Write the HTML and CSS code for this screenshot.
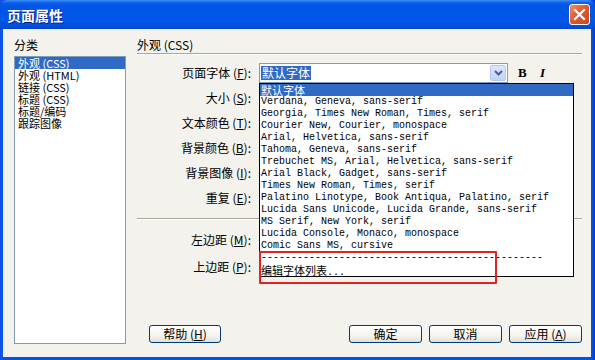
FILE: index.html
```html
<!DOCTYPE html>
<html>
<head>
<meta charset="utf-8">
<link rel="stylesheet" href="styles.css">
</head>
<body>
<div class="window">
  <div class="titlebar">
    <span class="title">页面属性</span>
    <span class="close"><svg width="13" height="13" viewBox="0 0 13 13"><path d="M2 2 L11 11 M11 2 L2 11" stroke="#fff" stroke-width="2.2" stroke-linecap="square"/></svg></span>
  </div>
  <div class="client">
    <div class="left">
      <div class="cap">分类</div>
      <div class="listbox">
        <div class="li sel">外观 (CSS)</div>
        <div class="li">外观 (HTML)</div>
        <div class="li">链接 (CSS)</div>
        <div class="li">标题 (CSS)</div>
        <div class="li">标题/编码</div>
        <div class="li">跟踪图像</div>
      </div>
    </div>
    <div class="right">
      <div class="cap">外观 (CSS)</div>
      <div class="sep"></div>
      <div class="form">
        <div class="row">
          <span class="lbl">页面字体 (<u>F</u>):</span>
          <div class="select">
            <span class="selval">默认字体</span>
            <span class="arrow"><svg width="9" height="6" viewBox="0 0 9 6"><path d="M1 1 L4.5 4.5 L8 1" fill="none" stroke="#4D6185" stroke-width="2"/></svg></span>
          </div>
          <span class="bold">B</span>
          <span class="ital">I</span>
        </div>
        <div class="row"><span class="lbl">大小 (<u>S</u>):</span></div>
        <div class="row"><span class="lbl">文本颜色 (<u>T</u>):</span></div>
        <div class="row"><span class="lbl">背景颜色 (<u>B</u>):</span></div>
        <div class="row"><span class="lbl">背景图像 (<u>I</u>):</span></div>
        <div class="row"><span class="lbl">重复 (<u>E</u>):</span></div>
        <div class="sep2"></div>
        <div class="row"><span class="lbl">左边距 (<u>M</u>):</span></div>
        <div class="row last"><span class="lbl">上边距 (<u>P</u>):</span></div>
      </div>
      <div class="buttons">
        <span class="btn help">帮助 (<u>H</u>)</span>
        <span class="btn">确定</span>
        <span class="btn">取消</span>
        <span class="btn">应用 (<u>A</u>)</span>
      </div>
    </div>
    <div class="dropdown">
      <div class="dd sel"><span class="cn">默认字体</span></div>
      <div class="dd">Verdana, Geneva, sans-serif</div>
      <div class="dd">Georgia, Times New Roman, Times, serif</div>
      <div class="dd">Courier New, Courier, monospace</div>
      <div class="dd">Arial, Helvetica, sans-serif</div>
      <div class="dd">Tahoma, Geneva, sans-serif</div>
      <div class="dd">Trebuchet MS, Arial, Helvetica, sans-serif</div>
      <div class="dd">Arial Black, Gadget, sans-serif</div>
      <div class="dd">Times New Roman, Times, serif</div>
      <div class="dd">Palatino Linotype, Book Antiqua, Palatino, serif</div>
      <div class="dd">Lucida Sans Unicode, Lucida Grande, sans-serif</div>
      <div class="dd">MS Serif, New York, serif</div>
      <div class="dd">Lucida Console, Monaco, monospace</div>
      <div class="dd">Comic Sans MS, cursive</div>
      <div class="dd">-----------------------------------------------</div>
      <div class="dd"><span class="cn">编辑字体列表</span>...</div>
    </div>
    <div class="redbox"></div>
  </div>
</div>
</body>
</html>
```

FILE: styles.css
```css
* { box-sizing: border-box; margin: 0; padding: 0; }
html, body { width: 595px; height: 360px; overflow: hidden; }
body {
  margin: 0;
  background: #0054E3;
  font-family: "Noto Sans CJK SC", "Liberation Sans", sans-serif;
  font-size: 12px;
  color: #000;
}
.window {
  width: 595px;
  height: 360px;
  display: flex;
  flex-direction: column;
  background: linear-gradient(to right, #0831D9 0, #166AEE 1px, #0054E3 2px, #0054E3 592px, #0831D9 595px);
}
.titlebar {
  height: 29px;
  flex: none;
  display: flex;
  align-items: center;
  justify-content: space-between;
  padding: 0 5px 0 7px;
  border-radius: 7px 7px 0 0;
  background: linear-gradient(to bottom, #3D8FF8 0, #0A5DE8 3px, #0055E4 6px, #0057E8 20px, #0050DC 26px, #0046CC 29px);
}
.title {
  color: #fff;
  font-weight: bold;
  font-size: 14px;
  line-height: 14px;
  text-shadow: 1px 1px #0A1E8C;
}
.close {
  width: 21px;
  height: 21px;
  border: 1px solid #fff;
  border-radius: 3px;
  background: linear-gradient(135deg, #F08F6A 0, #E25A2C 45%, #C8461C 100%);
  display: flex;
  align-items: center;
  justify-content: center;
}
.client {
  flex: 1;
  position: relative;
  margin: 0 4px 3px 3px;
  background: #F3F2EC;
  display: flex;
  gap: 11px;
  padding: 9px 9px 13px 11px;
}
.left {
  width: 112px;
  flex: none;
  display: flex;
  flex-direction: column;
}
.cap {
  height: 14px;
  line-height: 14px;
  margin-bottom: 4px;
  white-space: nowrap;
}
.right .cap { margin-bottom: 1px; }
.listbox {
  flex: 1;
  background: #fff;
  border: 1px solid #7F9DB9;
}
.li {
  height: 12px;
  line-height: 12px;
  font-size: 11px;
  padding-left: 3px;
  white-space: nowrap;
}
.li.sel {
  background: #316AC5;
  color: #fff;
}
.right {
  flex: 1;
  display: flex;
  flex-direction: column;
}
.sep {
  border-top: 1px solid #ACA899;
  border-bottom: 1px solid #fff;
}
.form {
  margin-top: 5px;
  display: flex;
  flex-direction: column;
}
.row {
  height: 25px;
  display: flex;
  align-items: center;
}
.row.last { height: 29px; }
.lbl {
  width: 114px;
  flex: none;
  text-align: right;
  white-space: nowrap;
  line-height: 14px;
}
.sep2 {
  margin: 8px 0 7px;
  border-top: 1px solid #ACA899;
  border-bottom: 1px solid #fff;
}
.select {
  margin-left: 8px;
  width: 249px;
  height: 20px;
  border: 1px solid #7F9DB9;
  background: #fff;
  display: flex;
  align-items: center;
  padding: 0 1px;
}
.selval {
  background: #316AC5;
  color: #fff;
  height: 14px;
  line-height: 14px;
  padding: 0 1px;
}
.arrow {
  margin-left: auto;
  width: 16px;
  height: 16px;
  border-radius: 2px;
  border: 1px solid #B7C9F2;
  background: linear-gradient(to bottom, #DCE6FC 0, #C1D3FB 100%);
  display: flex;
  align-items: center;
  justify-content: center;
}
.bold {
  margin-left: 10px;
  font-family: "Liberation Serif", serif;
  font-weight: bold;
  font-size: 13px;
  width: 12px;
}
.ital {
  margin-left: 10px;
  font-family: "Liberation Serif", serif;
  font-weight: bold;
  font-style: italic;
  font-size: 13px;
}
.buttons {
  margin-top: auto;
  margin-bottom: 1px;
  height: 18px;
  display: flex;
  gap: 7px;
  padding-left: 12px;
}
.btn {
  width: 73px;
  height: 18px;
  border: 1px solid #003C74;
  border-radius: 3px;
  background: linear-gradient(to bottom, #FFFFFF 0, #F4F3EE 60%, #E3E0D6 100%);
  display: flex;
  align-items: center;
  justify-content: center;
  line-height: 14px;
  white-space: nowrap;
}
.btn.help { width: 72px; margin-right: auto; }
.dropdown {
  position: absolute;
  left: 256px;
  top: 54px;
  width: 315px;
  height: 194px;
  border: 1px solid #000;
  background: #fff;
  font-family: "Liberation Mono", monospace;
  font-size: 10px;
}
.dd {
  height: 12px;
  line-height: 12px;
  padding-left: 1px;
  white-space: pre;
}
.dd.sel {
  background: #316AC5;
  color: #fff;
}
.cn {
  font-family: "Noto Sans CJK SC", sans-serif;
  font-size: 11px;
  line-height: 12px;
}
.redbox {
  position: absolute;
  left: 256px;
  top: 222px;
  width: 238px;
  height: 33px;
  border: 2px solid #E5231E;
  border-radius: 1px;
}
```
